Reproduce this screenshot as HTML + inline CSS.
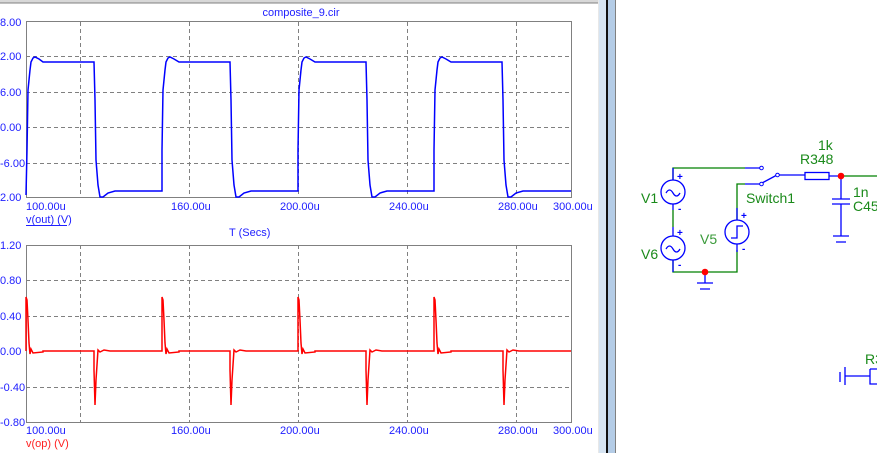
<!DOCTYPE html>
<html><head><meta charset="utf-8"><style>
html,body{margin:0;padding:0;background:#fff;width:877px;height:453px;overflow:hidden}
svg{display:block}
text{font-family:"Liberation Sans",sans-serif}
</style></head><body>
<svg width="877" height="453" viewBox="0 0 877 453" xmlns="http://www.w3.org/2000/svg">
<rect width="877" height="453" fill="#fff"/>
<rect x="0" y="0" width="598" height="3" fill="#d8d8d8"/>
<line x1="0" y1="3" x2="598" y2="3" stroke="#808080" stroke-width="1"/>
<rect x="598" y="0" width="9" height="453" fill="#d6e4f2"/>
<line x1="598.5" y1="0" x2="598.5" y2="453" stroke="#e8e8e8"/>
<rect x="606" y="0" width="2" height="453" fill="#101010"/>
<rect x="608" y="0" width="7" height="453" fill="#b4cce6"/>
<line x1="615.5" y1="0" x2="615.5" y2="453" stroke="#808080"/>

<text x="301" y="16" font-size="11" fill="#2020ff" text-anchor="middle">composite_9.cir</text>
<g stroke="#808080" stroke-width="1" stroke-dasharray="4,3" fill="none">
<line x1="80.5" y1="22" x2="80.5" y2="197"/>
<line x1="189.5" y1="22" x2="189.5" y2="197"/>
<line x1="298.5" y1="22" x2="298.5" y2="197"/>
<line x1="407.5" y1="22" x2="407.5" y2="197"/>
<line x1="516.5" y1="22" x2="516.5" y2="197"/>
<line x1="26" y1="56.5" x2="571" y2="56.5"/>
<line x1="26" y1="92.5" x2="571" y2="92.5"/>
<line x1="26" y1="127.5" x2="571" y2="127.5"/>
<line x1="26" y1="163.5" x2="571" y2="163.5"/>
</g>
<rect x="26.5" y="21.5" width="545" height="176" fill="none" stroke="#808080"/>
<g font-size="11" fill="#2020ff">
<text x="0" y="26">8.00</text>
<text x="0" y="60">2.00</text>
<text x="0" y="96">6.00</text>
<text x="0" y="131">0.00</text>
<text x="0" y="167">-6.00</text>
<text x="0" y="201">2.00</text>
<text x="26" y="210">100.00u</text>
<text x="171" y="210">160.00u</text>
<text x="280" y="210">200.00u</text>
<text x="389" y="210">240.00u</text>
<text x="498" y="210">280.00u</text>
<text x="553" y="210">300.00u</text>
<text x="26" y="223">v(out) (V)</text>
<text x="229" y="236">T (Secs)</text>
</g>
<line x1="26" y1="225.5" x2="67" y2="225.5" stroke="#2020ff"/>
<path fill="none" stroke="#0000ff" stroke-width="1.5" d="
M26,195 L27,150 L28,90 L30,70 L31,62 L33,58 L35,57 L39,59 L43,62 L94,62 L95,100 L96,160 L98,185 L100,197 L103,197 L108,193 L115,191 L162,191
L162,150 L163,90 L165,70 L166,62 L168,58 L170,57 L174,59 L179,62 L230,62 L231,100 L232,160 L234,185 L236,197 L239,197 L244,193 L251,191 L298,191
L298,150 L299,90 L301,70 L302,62 L304,58 L306,57 L310,59 L315,62 L366,62 L367,100 L368,160 L370,185 L372,197 L375,197 L380,193 L387,191 L434,191
L434,150 L435,90 L437,70 L438,62 L440,58 L442,57 L446,59 L451,62 L502,62 L503,100 L504,160 L506,185 L508,197 L511,197 L516,193 L523,191 L571,191"/>

<g stroke="#808080" stroke-width="1" stroke-dasharray="4,3" fill="none">
<line x1="80.5" y1="245" x2="80.5" y2="422"/>
<line x1="189.5" y1="245" x2="189.5" y2="422"/>
<line x1="298.5" y1="245" x2="298.5" y2="422"/>
<line x1="407.5" y1="245" x2="407.5" y2="422"/>
<line x1="516.5" y1="245" x2="516.5" y2="422"/>
<line x1="26" y1="280.5" x2="571" y2="280.5"/>
<line x1="26" y1="316.5" x2="571" y2="316.5"/>
<line x1="26" y1="387.5" x2="571" y2="387.5"/>
</g>
<rect x="26.5" y="245.5" width="545" height="177" fill="none" stroke="#808080"/>
<g font-size="11" fill="#2020ff">
<text x="0" y="249">1.20</text>
<text x="0" y="284">0.80</text>
<text x="0" y="320">0.40</text>
<text x="0" y="355">0.00</text>
<text x="0" y="391">-0.40</text>
<text x="0" y="426">-0.80</text>
<text x="26" y="434">100.00u</text>
<text x="171" y="434">160.00u</text>
<text x="280" y="434">200.00u</text>
<text x="389" y="434">240.00u</text>
<text x="498" y="434">280.00u</text>
<text x="553" y="434">300.00u</text>
<text x="229" y="461">T (Secs)</text>
</g>
<text x="26" y="447" font-size="11" fill="#ff2020">v(op) (V)</text>
<path fill="none" stroke="#ff0000" stroke-width="1.5" d="
M26,351 L26,297 L27,300 L28,320 L29,343 L30,354 L31,349 L33,353 L43,352 L43,351 L94,351 L94,370 L95,405 L96,380 L97,365 L98,350 L100,352 L104,350 L110,351
L162,351 L162,297 L163,300 L164,320 L165,343 L166,354 L167,349 L169,353 L179,352 L179,351 L230,351 L230,370 L231,405 L232,380 L233,365 L234,350 L236,352 L240,350 L246,351
L298,351 L298,297 L299,300 L300,320 L301,343 L302,354 L303,349 L305,353 L315,352 L315,351 L366,351 L366,370 L367,405 L368,380 L369,365 L370,350 L372,352 L376,350 L382,351
L434,351 L434,297 L435,300 L436,320 L437,343 L438,354 L439,349 L441,353 L451,352 L451,351 L503,351 L503,370 L504,405 L505,380 L506,365 L507,350 L509,352 L513,350 L519,351 L571,351"/>

<g fill="none" stroke-width="1.3">
<path stroke="#008000" d="M673,180 V168 H745 M673,210 V227 M673,260 V272 H737 V250 M737,220 V184 H745 M841,176 H877"/>
<path stroke="#0000ff" d="M673,168 V180 M673,204 V210 M673,227 V236 M673,260 V272 M745,168 H760 M745,184 H760 M737,208 V220 M737,244 V252 M762,183 L777,175 M779,175 H805 M829,176 H841 M841,176 V199 M832,199 H850 M832,204 H850 M841,204 V236 M833,236 H849 M836,242 H846 M705,272 V283 M697,283 H713 M700,289 H710 M840,372 V382 M845,367 V385 M845,376 H870 M870,369 V384 H877 M870,369 H877"/>
<circle cx="673" cy="192" r="12" stroke="#0000ff"/>
<circle cx="673" cy="248" r="12" stroke="#0000ff"/>
<circle cx="737" cy="232" r="12" stroke="#0000ff"/>
<path stroke="#0000ff" d="M666,193 q3.5,-6 7,0 q3.5,6 7,0 M666,249 q3.5,-6 7,0 q3.5,6 7,0 M731,238 H737 V226 H743"/>
<rect x="805" y="172.5" width="24" height="7" stroke="#0000ff"/>
<circle cx="761.5" cy="168" r="1.8" stroke="#0000ff" fill="#fff" stroke-width="1"/>
<circle cx="761.5" cy="184" r="1.8" stroke="#0000ff" fill="#fff" stroke-width="1"/>
<circle cx="777.5" cy="175" r="1.8" stroke="#0000ff" fill="#fff" stroke-width="1"/>
</g>
<circle cx="841" cy="176" r="3.3" fill="#ff0000"/>
<circle cx="705" cy="272" r="3.3" fill="#ff0000"/>
<g font-size="10" fill="#0000ff" font-weight="bold">
<text x="677" y="180">+</text><text x="678" y="212">-</text>
<text x="677" y="236">+</text><text x="678" y="268">-</text>
<text x="741" y="219">+</text><text x="742" y="252">-</text>
</g>
<g font-size="14" fill="#1a8a1a">
<text x="641" y="203">V1</text>
<text x="641" y="259">V6</text>
<text x="700" y="244" fill="#3a9a3a">V5</text>
<text x="746" y="203">Switch1</text>
<text x="818" y="150">1k</text>
<text x="800" y="164">R348</text>
<text x="853" y="197">1n</text>
<text x="853" y="211">C45</text>
<text x="865" y="364">R3</text>
</g>
</svg>
</body></html>
